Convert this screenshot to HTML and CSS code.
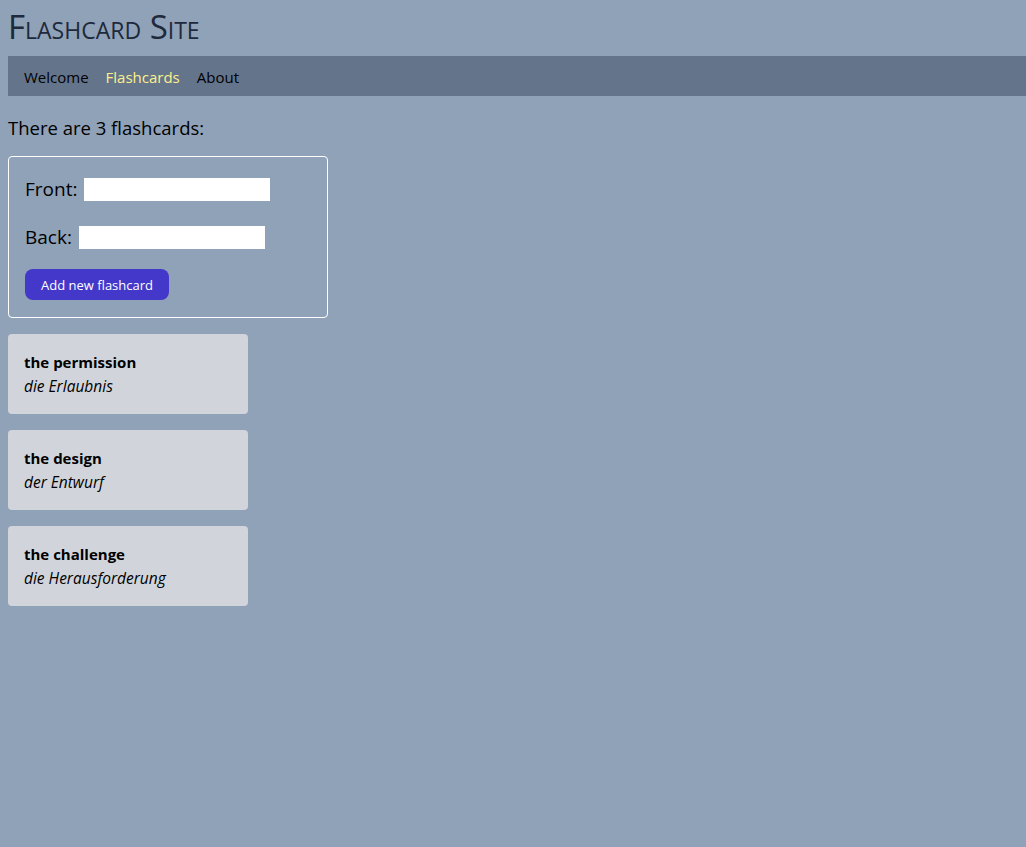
FILE: index.html
```html
<!DOCTYPE html>
<html lang="en">
<head>
<meta charset="utf-8">
<title>Flashcard Site</title>
<link rel="stylesheet" href="styles.css">
</head>
<body>
<header class="site-header">
  <h1 class="site-title">Flashcard Site</h1>
</header>
<nav class="nav">
  <a class="nav-link" href="#">Welcome</a>
  <a class="nav-link active" href="#">Flashcards</a>
  <a class="nav-link" href="#">About</a>
</nav>
<main class="content">
  <p class="count">There are 3 flashcards:</p>
  <form class="add-form">
    <div class="field"><label>Front:</label><input type="text"></div>
    <div class="field"><label>Back:</label><input type="text"></div>
    <button type="button" class="btn">Add new flashcard</button>
  </form>
  <div class="cards">
    <div class="card"><div class="front">the permission</div><div class="back">die Erlaubnis</div></div>
    <div class="card"><div class="front">the design</div><div class="back">der Entwurf</div></div>
    <div class="card"><div class="front">the challenge</div><div class="back">die Herausforderung</div></div>
  </div>
</main>
</body>
</html>
```
FILE: styles.css
```css
html, body { height: 100%; }
body {
  margin: 0;
  padding: 0 0 0 8px;
  background: #90a2b8;
  font-family: "Open Sans", "Noto Sans", sans-serif;
  color: #000;
}
.site-header { padding-top: 7px; height: 56px; box-sizing: border-box; }
.site-title {
  margin: 0;
  font-size: 33px;
  font-weight: 400;
  font-variant: small-caps;
  color: #1e293b;
  line-height: 40px;
}
.nav {
  display: flex;
  gap: 17px;
  height: 40px;
  box-sizing: border-box;
  padding-top: 2px;
  align-items: center;
  padding-left: 16px;
  background: #64748b;
}
.nav-link { color: #000; text-decoration: none; font-size: 15px; }
.nav-link.active { color: #fef08a; }
.content { padding-top: 16px; }
.count { margin: 0 0 12px; font-size: 18.5px; line-height: 32px; }
.add-form {
  width: 320px;
  box-sizing: border-box;
  border: 1px solid #fff;
  border-radius: 4px;
  padding: 16px 16px 17px;
  display: flex;
  flex-direction: column;
  align-items: flex-start;
}
.field { display: flex; align-items: center; gap: 7px; font-size: 19px; height: 32px; margin-bottom: 16px; }
.field input {
  width: 186px; height: 23px; box-sizing: border-box;
  border: none; background: #fff; padding: 0 4px; margin: 0;
}
.btn {
  margin-top: 0;
  width: 144px; height: 31px;
  background: #4338ca; color: #fff; border: none; border-radius: 8px;
  font-family: inherit; font-size: 13px;
}
.cards { display: flex; flex-direction: column; gap: 16px; margin-top: 16px; }
.card {
  width: 240px; height: 80px; box-sizing: border-box;
  background: #d1d5db; border-radius: 4px; padding: 16px;
  line-height: 24px; font-size: 15px;
}
.front { font-weight: 700; }
.back { font-style: italic; font-size: 15.5px; }
```
